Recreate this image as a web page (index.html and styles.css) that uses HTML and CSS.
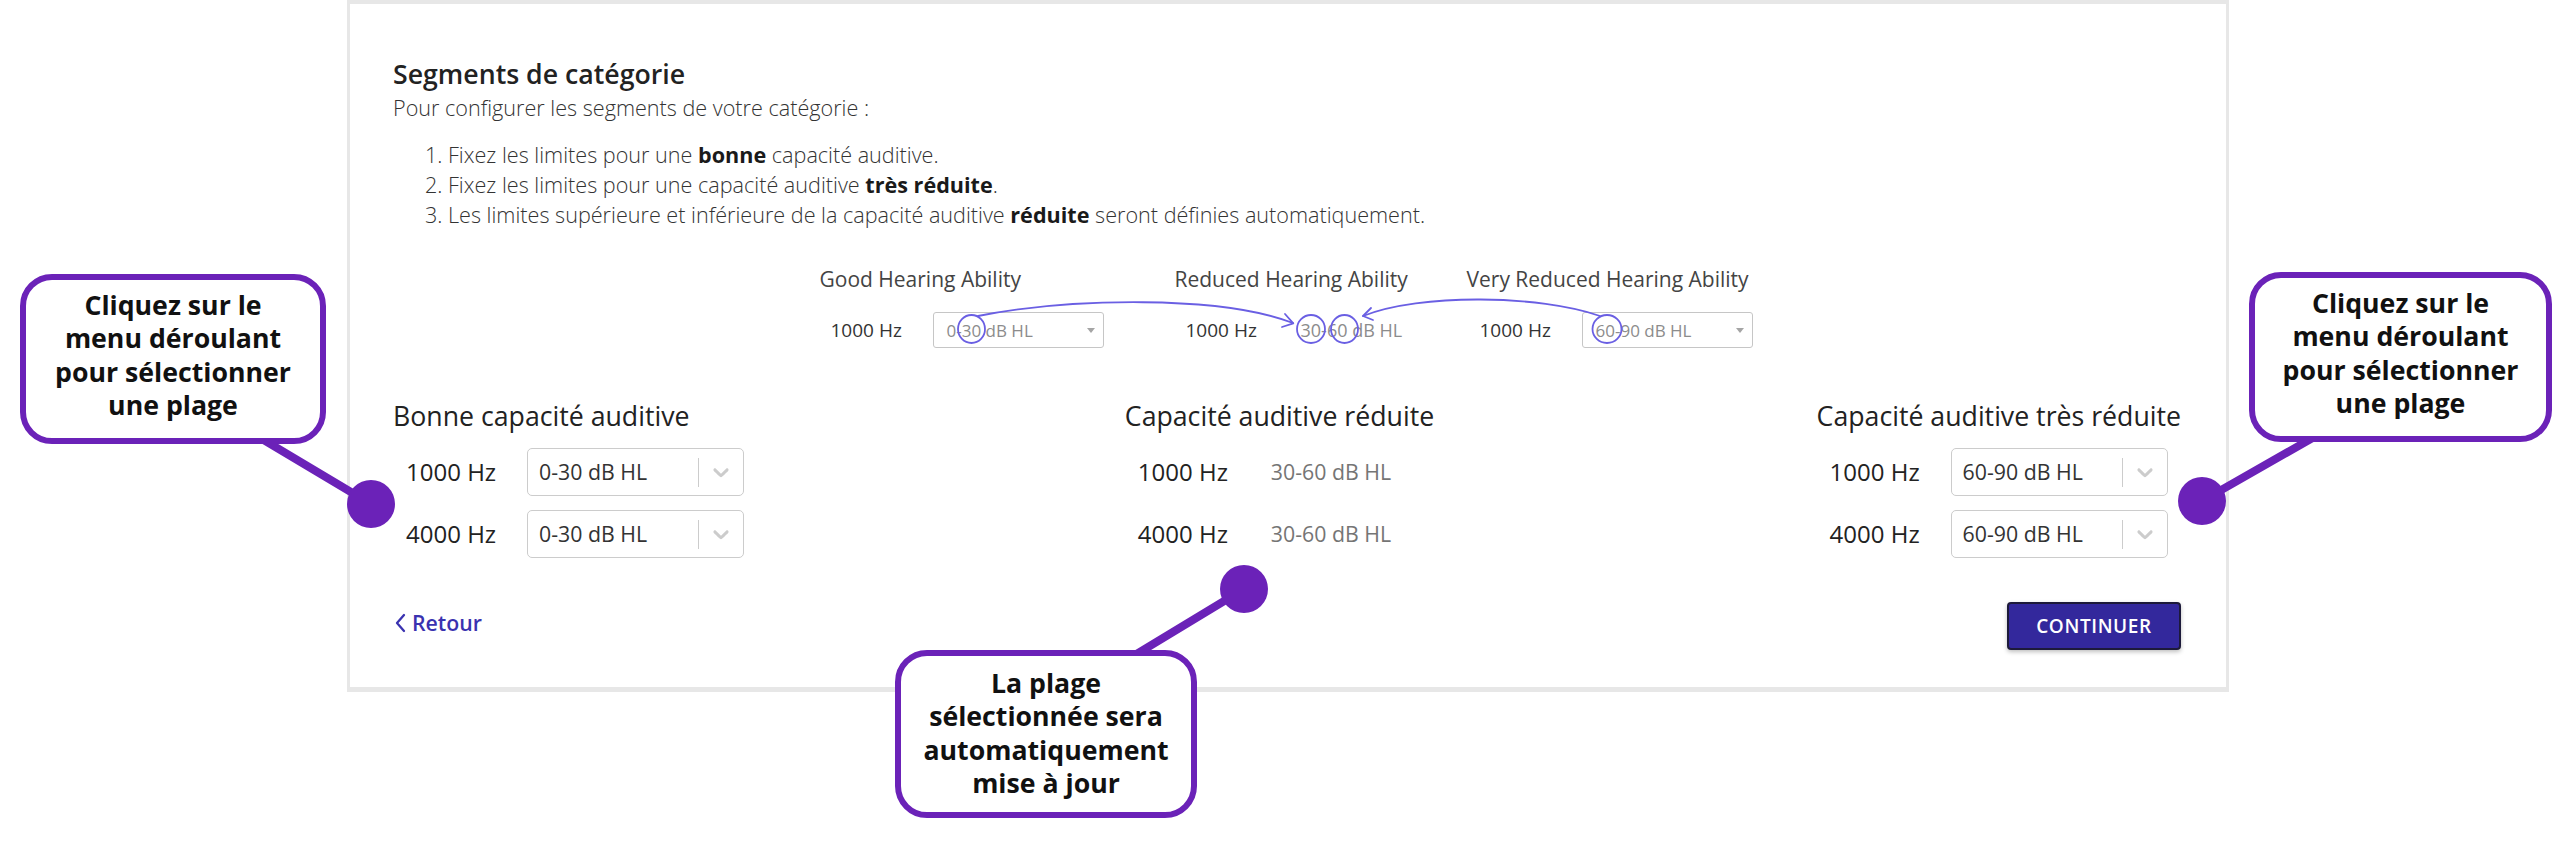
FILE: index.html
```html
<!DOCTYPE html>
<html lang="fr">
<head>
<meta charset="utf-8">
<title>Segments de catégorie</title>
<link rel="stylesheet" href="styles.css">
</head>
<body>
<div class="page">
  <main class="card">
    <h1 class="title">Segments de catégorie</h1>
    <p class="intro">Pour configurer les segments de votre catégorie :</p>
    <ol class="steps">
      <li>Fixez les limites pour une <b>bonne</b> capacité auditive.</li>
      <li>Fixez les limites pour une capacité auditive <b>très réduite</b>.</li>
      <li>Les limites supérieure et inférieure de la capacité auditive <b>réduite</b> seront définies automatiquement.</li>
    </ol>

    <figure class="diagram">
      <div class="dcol dcol-good">
        <div class="dhead">Good Hearing Ability</div>
        <div class="drow"><span class="dlabel">1000 Hz</span><span class="dbox">0-30 dB HL<i class="dcaret"></i></span></div>
      </div>
      <div class="dcol dcol-red">
        <div class="dhead">Reduced Hearing Ability</div>
        <div class="drow"><span class="dlabel">1000 Hz</span><span class="dval">30-60 dB HL</span></div>
      </div>
      <div class="dcol dcol-vred">
        <div class="dhead">Very Reduced Hearing Ability</div>
        <div class="drow"><span class="dlabel">1000 Hz</span><span class="dbox">60-90 dB HL<i class="dcaret"></i></span></div>
      </div>
      <svg class="doverlay" width="935" height="83" viewBox="0 0 935 83">
        <g fill="none" stroke="#6a5fe3" stroke-width="1.8" stroke-linecap="round" stroke-linejoin="round">
          <ellipse cx="151.5" cy="64" rx="13.5" ry="14"/>
          <ellipse cx="491" cy="64" rx="14" ry="14"/>
          <ellipse cx="524.5" cy="64" rx="13.5" ry="14"/>
          <ellipse cx="787" cy="64" rx="14.5" ry="14"/>
          <path d="M158 51 C250 33 400 30 473 58"/>
          <path d="M465 49 L473.3 58.3 L462 62"/>
          <path d="M780 51 C720 30 600 28 543 51"/>
          <path d="M551 43 L543 51 L553 55"/>
        </g>
      </svg>
    </figure>

    <section class="segments">
      <div class="seg seg-good">
        <h2 class="seg-title">Bonne capacité auditive</h2>
        <div class="seg-rows">
          <div class="seg-row">
            <span class="hz">1000 Hz</span>
            <div class="select"><span class="select-value">0-30 dB HL</span><span class="select-sep"></span><span class="select-ind"><svg viewBox="0 0 20 20" width="26" height="26"><path d="M4.516 7.548c0.436-0.446 1.043-0.481 1.576 0l3.908 3.747 3.908-3.747c0.533-0.481 1.141-0.446 1.574 0 0.436 0.445 0.408 1.197 0 1.615-0.406 0.418-4.695 4.502-4.695 4.502-0.217 0.223-0.502 0.335-0.787 0.335s-0.57-0.112-0.789-0.335c0 0-4.287-4.084-4.695-4.502s-0.436-1.17 0-1.615z"/></svg></span></div>
          </div>
          <div class="seg-row">
            <span class="hz">4000 Hz</span>
            <div class="select"><span class="select-value">0-30 dB HL</span><span class="select-sep"></span><span class="select-ind"><svg viewBox="0 0 20 20" width="26" height="26"><path d="M4.516 7.548c0.436-0.446 1.043-0.481 1.576 0l3.908 3.747 3.908-3.747c0.533-0.481 1.141-0.446 1.574 0 0.436 0.445 0.408 1.197 0 1.615-0.406 0.418-4.695 4.502-4.695 4.502-0.217 0.223-0.502 0.335-0.787 0.335s-0.57-0.112-0.789-0.335c0 0-4.287-4.084-4.695-4.502s-0.436-1.17 0-1.615z"/></svg></span></div>
          </div>
        </div>
      </div>

      <div class="seg seg-mid">
        <h2 class="seg-title">Capacité auditive réduite</h2>
        <div class="seg-rows">
          <div class="seg-row"><span class="hz">1000 Hz</span><span class="static-value">30-60 dB HL</span></div>
          <div class="seg-row"><span class="hz">4000 Hz</span><span class="static-value">30-60 dB HL</span></div>
        </div>
      </div>

      <div class="seg seg-vred">
        <h2 class="seg-title">Capacité auditive très réduite</h2>
        <div class="seg-rows">
          <div class="seg-row">
            <span class="hz">1000 Hz</span>
            <div class="select"><span class="select-value">60-90 dB HL</span><span class="select-sep"></span><span class="select-ind"><svg viewBox="0 0 20 20" width="26" height="26"><path d="M4.516 7.548c0.436-0.446 1.043-0.481 1.576 0l3.908 3.747 3.908-3.747c0.533-0.481 1.141-0.446 1.574 0 0.436 0.445 0.408 1.197 0 1.615-0.406 0.418-4.695 4.502-4.695 4.502-0.217 0.223-0.502 0.335-0.787 0.335s-0.57-0.112-0.789-0.335c0 0-4.287-4.084-4.695-4.502s-0.436-1.17 0-1.615z"/></svg></span></div>
          </div>
          <div class="seg-row">
            <span class="hz">4000 Hz</span>
            <div class="select"><span class="select-value">60-90 dB HL</span><span class="select-sep"></span><span class="select-ind"><svg viewBox="0 0 20 20" width="26" height="26"><path d="M4.516 7.548c0.436-0.446 1.043-0.481 1.576 0l3.908 3.747 3.908-3.747c0.533-0.481 1.141-0.446 1.574 0 0.436 0.445 0.408 1.197 0 1.615-0.406 0.418-4.695 4.502-4.695 4.502-0.217 0.223-0.502 0.335-0.787 0.335s-0.57-0.112-0.789-0.335c0 0-4.287-4.084-4.695-4.502s-0.436-1.17 0-1.615z"/></svg></span></div>
          </div>
        </div>
      </div>
    </section>

    <div class="footer">
      <a class="back" href="#"><svg class="back-icon" width="14" height="20" viewBox="0 0 14 20"><polyline points="11,2 4,10 11,18" fill="none" stroke="currentColor" stroke-width="2.3" stroke-linecap="round" stroke-linejoin="round"/></svg>Retour</a>
      <button class="continue" type="button">CONTINUER</button>
    </div>
  </main>

  <svg class="pointers" width="2572" height="844" viewBox="0 0 2572 844">
    <g stroke="#6b22b8" stroke-width="8" stroke-linecap="round" fill="#6b22b8">
      <line x1="257" y1="436" x2="371" y2="504"/>
      <circle cx="371" cy="504" r="24" stroke="none"/>
      <line x1="2316" y1="436" x2="2202" y2="501"/>
      <circle cx="2202" cy="501" r="24" stroke="none"/>
      <line x1="1130" y1="658" x2="1244" y2="589"/>
      <circle cx="1244" cy="589" r="24" stroke="none"/>
    </g>
  </svg>

  <div class="callout callout-left">Cliquez sur le<br>menu déroulant<br>pour sélectionner<br>une plage</div>
  <div class="callout callout-right">Cliquez sur le<br>menu déroulant<br>pour sélectionner<br>une plage</div>
  <div class="callout callout-bottom">La plage<br>sélectionnée sera<br>automatiquement<br>mise à jour</div>
</div>
</body>
</html>
```

FILE: styles.css
```css
* { box-sizing: border-box; }

html, body {
  margin: 0;
  padding: 0;
  background: #fff;
}

body {
  font-family: "Open Sans", "Noto Sans", sans-serif;
  color: #333;
}

.page {
  position: relative;
  width: 2572px;
  height: 844px;
  overflow: hidden;
}

/* ---------- card ---------- */
.card {
  display: block;
  margin-left: 347px;
  width: 1882px;
  background: #fff;
  border: 3px solid #e7e7e7;
  border-top-width: 4px;
  border-bottom-width: 5px;
  padding: 51px 45px 37px 43px;
}

.title {
  margin: 0;
  font-size: 26.7px;
  font-weight: 600;
  line-height: 38px;
  color: #222;
}

.intro {
  margin: 0;
  font-size: 21.6px;
  font-weight: 300;
  line-height: 30px;
  color: #333;
}

.steps {
  margin: 17px 0 0;
  padding-left: 55px;
  font-size: 21.6px;
  font-weight: 300;
  line-height: 30px;
  color: #333;
}

.steps b {
  font-weight: 700;
  color: #1a1a1a;
}

/* ---------- diagram ---------- */
.diagram {
  position: relative;
  display: flex;
  width: 935px;
  margin: 35px auto 0;
  padding: 0;
}

.dcol-good { width: 284px; }
.dcol-red { width: 235px; margin-left: 71px; }
.dcol-vred { width: 288px; margin-left: 57px; }

.dhead {
  font-size: 21px;
  line-height: 28px;
  color: #444;
  white-space: nowrap;
}

.drow {
  display: flex;
  align-items: center;
  margin-top: 19px;
  height: 36px;
  padding-left: 11px;
}

.dcol-vred .drow { padding-left: 13px; }

.dlabel {
  flex: none;
  width: 102px;
  font-size: 19px;
  line-height: 36px;
  color: #333;
  white-space: nowrap;
}

.dbox {
  flex: none;
  display: flex;
  align-items: center;
  justify-content: space-between;
  width: 171px;
  height: 36px;
  border: 1px solid #c6c6c6;
  border-radius: 3px;
  padding: 1px 8px 0 13px;
  font-size: 17px;
  line-height: 34px;
  color: #8c8c8c;
  white-space: nowrap;
}

.dcaret {
  display: block;
  width: 0;
  height: 0;
  border-left: 4px solid transparent;
  border-right: 4px solid transparent;
  border-top: 5px solid #a5a5a5;
}

.dval {
  padding-left: 13px;
  font-size: 18px;
  line-height: 36px;
  color: #8c8c8c;
  white-space: nowrap;
}

.doverlay {
  position: absolute;
  left: 0;
  top: 0;
  overflow: visible;
  pointer-events: none;
}

/* ---------- segments ---------- */
.segments {
  display: grid;
  grid-template-columns: 1fr auto 1fr;
  margin-top: 51px;
}

.seg-mid { margin-right: 15px; }
.seg-vred { justify-self: end; }

.seg-title {
  margin: 0;
  font-size: 26.7px;
  font-weight: 400;
  line-height: 34px;
  color: #222;
  white-space: nowrap;
}

.seg-rows {
  display: flex;
  flex-direction: column;
  gap: 14px;
  margin-top: 15px;
}

.seg-row {
  display: flex;
  align-items: center;
  height: 48px;
  padding-left: 13px;
}

.hz {
  flex: none;
  width: 121px;
  font-size: 24px;
  line-height: 48px;
  color: #222;
  white-space: nowrap;
}

.select {
  flex: none;
  display: flex;
  align-items: stretch;
  width: 217px;
  height: 48px;
  border: 1px solid #ccc;
  border-radius: 5px;
  background: #fff;
}

.select-value {
  flex: 1;
  padding-left: 11px;
  font-size: 21.3px;
  line-height: 46px;
  color: #333;
  white-space: nowrap;
}

.select-sep {
  width: 1px;
  margin: 8.5px 0;
  background: #ccc;
}

.select-ind {
  flex: none;
  width: 44px;
  display: flex;
  align-items: center;
  justify-content: center;
}

.select-ind svg { fill: #ccc; }

.static-value {
  padding-left: 12px;
  font-size: 21.3px;
  line-height: 48px;
  color: #757575;
  white-space: nowrap;
}

/* ---------- footer ---------- */
.footer {
  display: flex;
  justify-content: space-between;
  align-items: flex-start;
  margin-top: 44px;
}

.back {
  display: flex;
  align-items: center;
  margin-top: 6px;
  font-size: 21.3px;
  font-weight: 600;
  line-height: 30px;
  color: #3a32b0;
  text-decoration: none;
}

.back-icon {
  margin-right: 5px;
}

.continue {
  width: 174px;
  height: 48px;
  padding: 0;
  border: 2px solid #1d1a3a;
  border-radius: 4px;
  background: #33289c;
  color: #fff;
  font-family: "Open Sans", "Noto Sans", sans-serif;
  font-size: 19px;
  font-weight: 600;
  letter-spacing: 0.6px;
  line-height: 44px;
  box-shadow: 0 2px 4px rgba(0, 0, 0, 0.25);
}

/* ---------- annotations (overlay) ---------- */
.pointers {
  position: absolute;
  left: 0;
  top: 0;
  pointer-events: none;
}

.callout {
  position: absolute;
  border: 6px solid #6b22b8;
  border-radius: 32px;
  background: #fff;
  font-size: 26.7px;
  font-weight: 700;
  line-height: 33.3px;
  color: #111;
  text-align: center;
  white-space: nowrap;
}

.callout-left {
  left: 20px;
  top: 274px;
  width: 306px;
  height: 170px;
  padding-top: 8px;
}

.callout-right {
  left: 2249px;
  top: 272px;
  width: 303px;
  height: 170px;
  padding-top: 8px;
}

.callout-bottom {
  left: 895px;
  top: 650px;
  width: 302px;
  height: 168px;
  padding-top: 10px;
}
```
